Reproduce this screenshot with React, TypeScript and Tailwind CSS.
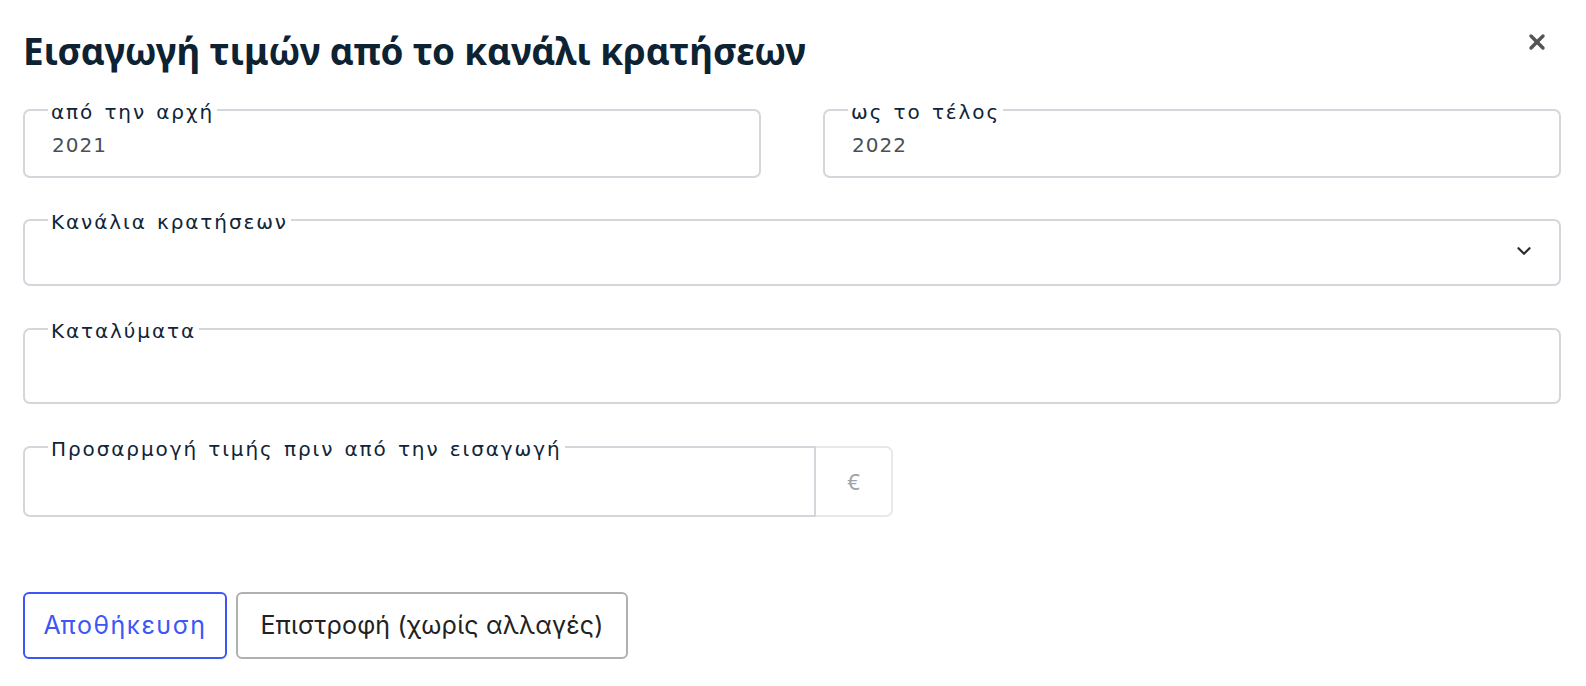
import { X, ChevronDown } from 'lucide-react';

const labelCls =
  "absolute -top-[10px] left-[23px] bg-white px-[3px] text-[20px] leading-[22px] tracking-[1.9px] [word-spacing:2px] text-[#0f2537] font-['DejaVu_Sans',sans-serif]";

function Field({
  label,
  value,
  className = '',
  children,
}: {
  label: string;
  value?: string;
  className?: string;
  children?: React.ReactNode;
}) {
  return (
    <div className={`relative rounded-[7px] border-2 border-[#d3d7dc] bg-white ${className}`}>
      <span className={labelCls}>{label}</span>
      <div className="flex h-full items-center pl-[27px] pr-[24px] pt-[3px]">
        <span className="flex-1 text-[20px] tracking-[1px] text-[#4a4f57] font-['DejaVu_Sans',sans-serif]">{value}</span>
        {children}
      </div>
    </div>
  );
}

export default function App() {
  return (
    <div className="min-h-screen bg-white pl-[23px] pr-[25px] pt-[30px] font-['Inter',sans-serif]">
      <div className="flex items-start justify-between">
        <h1 className="text-[36.8px] font-bold leading-[42px] text-[#0d2233] tracking-[-0.1px] font-['Noto_Sans',sans-serif]">
          Εισαγωγή τιμών από το κανάλι κρατήσεων
        </h1>
        <button className="mr-[12px] mt-[0px] text-[#555]">
          <X size={24} strokeWidth={3.4} />
        </button>
      </div>

      <div className="mt-[37px] flex flex-col">
        <div className="flex gap-[62px]">
          <Field label="από την αρχή" value="2021" className="h-[69px] flex-1" />
          <Field label="ως το τέλος" value="2022" className="h-[69px] flex-1" />
        </div>

        <Field label="Κανάλια κρατήσεων" className="mt-[41px] h-[67px]">
          <ChevronDown size={22} strokeWidth={2.4} className="text-[#2b2b2b] mt-[-6px]" />
        </Field>

        <Field label="Καταλύματα" className="mt-[42px] h-[76px]" />

        <div className="mt-[42px] flex h-[71px]">
          <div className="relative w-[793px] rounded-l-[7px] border-2 border-[#d3d7dc] bg-white">
            <span className={labelCls}>Προσαρμογή τιμής πριν από την εισαγωγή</span>
          </div>
          <div className="flex w-[77px] items-center justify-center rounded-r-[7px] border-2 border-l-0 border-[#e6e8eb] text-[22px] text-[#9ea3a9] font-['Noto_Sans',sans-serif]">
            €
          </div>
        </div>

        <div className="mt-[75px] flex gap-[9px]">
          <button className="h-[67px] w-[204px] rounded-[6px] border-2 border-[#3d56f5] text-[25px] tracking-[1.5px] text-[#3d56f5]">
            Αποθήκευση
          </button>
          <button className="h-[67px] w-[392px] rounded-[6px] border-2 border-[#b0b0b0] text-[25px] tracking-[0.2px] text-[#222]">
            Επιστροφή (χωρίς αλλαγές)
          </button>
        </div>
      </div>
    </div>
  );
}
